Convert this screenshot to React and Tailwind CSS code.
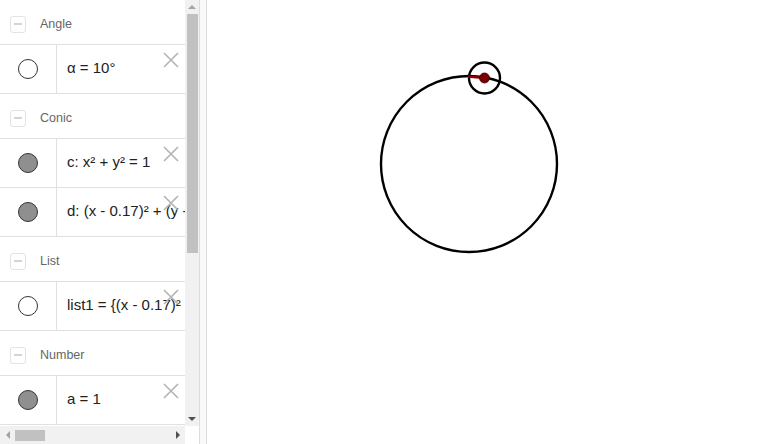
import React from 'react';

const groups = [
  { title: 'Angle', items: [{ text: 'α = 10°', filled: false }] },
  {
    title: 'Conic',
    items: [
      { text: 'c: x² + y² = 1', filled: true },
      { text: 'd: (x - 0.17)² + (y - 0.98)² = 0.03', filled: true },
    ],
  },
  { title: 'List', items: [{ text: 'list1 = {(x - 0.17)² + (y - 0.98)² = 0.03}', filled: false }] },
  { title: 'Number', items: [{ text: 'a = 1', filled: true }] },
];

const CloseIcon = () => (
  <svg width="18" height="18" viewBox="0 0 18 18" className="absolute right-[5px] top-[6px]">
    <path d="M2 2 L16 16 M16 2 L2 16" stroke="#b4b4b4" strokeWidth="1.6" fill="none" />
  </svg>
);

const Header = ({ title }) => (
  <div className="h-[45px] pt-[4px] flex items-center border-b border-[#e0e0e0] shrink-0">
    <div className="ml-[10px] w-[16px] h-[17px] rounded-[3px] border border-[#e3e3e3] flex items-center justify-center">
      <div className="w-[8px] h-[2px] bg-[#d4d4d4]" />
    </div>
    <span className="ml-[14px] text-[12.5px] text-[#666] font-['Liberation_Sans',sans-serif]">{title}</span>
  </div>
);

const Item = ({ text, filled }) => (
  <div className="relative h-[49px] flex border-b border-[#e0e0e0] shrink-0">
    <div className="w-[57px] shrink-0 border-r border-[#e0e0e0] flex items-center justify-center pb-[1px]">
      <div
        className={
          filled
            ? 'w-[20px] h-[20px] rounded-full border-[1.5px] border-[#333] bg-[#8f8f8f]'
            : 'w-[20px] h-[20px] rounded-full border-[1.5px] border-[#333] bg-white'
        }
      />
    </div>
    <div className="flex items-center pl-[10px] pb-[1px] whitespace-nowrap overflow-hidden text-[15px] text-[#222] font-['Liberation_Sans',sans-serif]">
      {text}
    </div>
    <CloseIcon />
  </div>
);

export default function App() {
  return (
    <div className="w-[773px] h-[444px] flex bg-white overflow-hidden select-none">
      {/* Algebra view */}
      <div className="w-[199px] h-full flex flex-col shrink-0">
        <div className="flex flex-1 min-h-0">
          <div className="w-[185px] overflow-hidden flex flex-col">
            {groups.map((g) => (
              <React.Fragment key={g.title}>
                <Header title={g.title} />
                {g.items.map((it) => (
                  <Item key={it.text} {...it} />
                ))}
              </React.Fragment>
            ))}
          </div>
          <div className="w-[14px] bg-[#f1f1f1] flex flex-col items-center">
            <div className="h-[14px] flex items-center justify-center">
              <div className="w-0 h-0 border-l-[4px] border-r-[4px] border-b-[4px] border-l-transparent border-r-transparent border-b-[#a3a3a3]" />
            </div>
            <div className="w-[11px] h-[239px] ml-[1px] bg-[#c1c1c1]" />
            <div className="flex-1" />
            <div className="h-[14px] flex items-center justify-center">
              <div className="w-0 h-0 border-l-[4px] border-r-[4px] border-t-[4px] border-l-transparent border-r-transparent border-t-[#505050]" />
            </div>
          </div>
        </div>
        <div className="h-[18px] flex shrink-0">
          <div className="w-[185px] bg-[#f1f1f1] flex items-center">
            <div className="w-[15px] flex items-center justify-center">
              <div className="w-0 h-0 border-t-[4px] border-b-[4px] border-r-[4px] border-t-transparent border-b-transparent border-r-[#a3a3a3]" />
            </div>
            <div className="w-[30px] h-[11px] bg-[#c1c1c1]" />
            <div className="flex-1" />
            <div className="w-[15px] flex items-center justify-center">
              <div className="w-0 h-0 border-t-[4px] border-b-[4px] border-l-[4px] border-t-transparent border-b-transparent border-l-[#505050]" />
            </div>
          </div>
          <div className="flex-1 bg-white" />
        </div>
      </div>

      {/* Splitter */}
      <div className="w-[8px] h-full shrink-0 border-l border-r border-[#dcdcdc] bg-[#f9f9f9]" />

      {/* Graphics view */}
      <div className="flex-1 h-full bg-white">
        <svg width="566" height="444" viewBox="0 0 566 444">
          <circle cx="262" cy="164" r="88" fill="none" stroke="#000" strokeWidth="2.4" />
          <circle cx="277.5" cy="78" r="15.5" fill="none" stroke="#000" strokeWidth="2.4" />
          <line x1="261" y1="76.5" x2="277.5" y2="78" stroke="#8b0000" strokeWidth="2.5" />
          <circle cx="277.5" cy="78" r="5" fill="#7a0000" stroke="#2a0000" strokeWidth="0.8" />
        </svg>
      </div>
    </div>
  );
}
